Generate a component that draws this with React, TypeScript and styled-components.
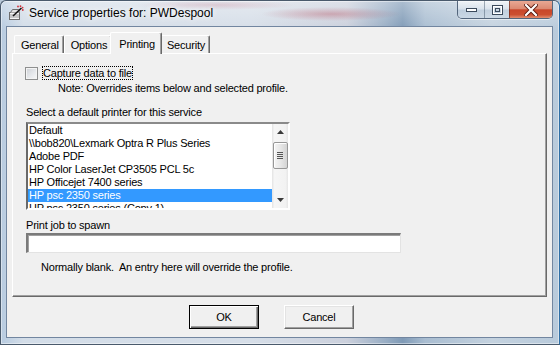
import React from 'react';
import styled, { createGlobalStyle } from 'styled-components';

const GlobalStyle = createGlobalStyle`
  html, body {
    margin: 0;
    padding: 0;
    background: #b8c8d8;
  }
  * {
    box-sizing: border-box;
  }
`;

const uiFont = `"Liberation Sans", Arial, sans-serif`;

const Window = styled.div`
  width: 560px;
  height: 345px;
  display: flex;
  flex-direction: column;
  padding: 0 6px 6px 5px;
  border: 1px solid #4a5a6c;
  border-right-color: #2f6fa6;
  border-radius: 6px 6px 0 0;
  box-shadow: inset 0 0 0 1px rgba(255, 255, 255, 0.45);
  background:
    radial-gradient(ellipse 70px 7px at 330px 13px, rgba(180, 70, 85, 0.35), transparent),
    radial-gradient(ellipse 80px 5px at 215px 4px, rgba(200, 110, 130, 0.25), transparent),
    linear-gradient(to bottom, rgba(255, 255, 255, 0.35), rgba(255, 255, 255, 0) 30px),
    linear-gradient(to right, #b7cbe0 0%, #d3dde8 4%, #d6dee8 45%, #cbd0dc 62%, #98adc4 69%, #7f9ab6 72%, #a9bdd1 76%, #c4d2df 88%, #b8cadb 100%);
  font-family: ${uiFont};
`;

const TitleBar = styled.div`
  height: 25px;
  display: flex;
  align-items: flex-start;
  padding-left: 2px;
`;

const AppIcon = styled.svg`
  width: 16px;
  height: 16px;
  margin-top: 4px;
  flex-shrink: 0;
`;

const Caption = styled.div`
  margin-left: 5px;
  margin-top: 5px;
  font-size: 12px;
  line-height: 15px;
  color: #000;
  text-shadow: 0 0 6px rgba(255, 255, 255, 0.95), 0 0 10px rgba(255, 255, 255, 0.8);
`;

const CaptionButtons = styled.div`
  margin-left: auto;
  display: flex;
  height: 18px;
  border: 1px solid rgba(45, 65, 90, 0.75);
  border-top: none;
  border-radius: 0 0 5px 5px;
  overflow: hidden;
  box-shadow: 0 1px 0 rgba(255, 255, 255, 0.5);
`;

const CapButton = styled.div<{ $width: number; $close?: boolean }>`
  width: ${({ $width }) => $width}px;
  height: 100%;
  display: flex;
  align-items: center;
  justify-content: center;
  border-left: ${({ $close }) => ($close ? '1px solid rgba(90, 30, 20, 0.6)' : '1px solid rgba(60, 80, 100, 0.45)')};
  background: ${({ $close }) =>
    $close
      ? 'linear-gradient(to bottom, #e9a894 0%, #dc8a72 45%, #c9472b 52%, #cc4f30 80%, #e28d70 100%)'
      : 'linear-gradient(to bottom, rgba(255,255,255,0.65) 0%, rgba(225,233,242,0.55) 48%, rgba(180,198,216,0.55) 52%, rgba(205,218,231,0.7) 100%)'};
  &:first-child {
    border-left: none;
  }
`;

const TabClient = styled.div`
  flex: 1;
  display: flex;
  flex-direction: column;
  padding: 5px 5px 0 5px;
  background: #f0f0f0;
  border: 1px solid #7286a0;
`;

const TabStrip = styled.div`
  height: 21px;
  display: flex;
  align-items: flex-end;
  padding-left: 2px;
  position: relative;
  z-index: 1;
`;

const Tab = styled.div<{ $active?: boolean }>`
  height: ${({ $active }) => ($active ? 22 : 18)}px;
  margin: ${({ $active }) => ($active ? '0 -2px -1px -2px' : '0')};
  padding: ${({ $active }) => ($active ? '5px 6px 0 8px' : '3px 4px 0 6px')};
  background: #f0f0f0;
  border-top: 1px solid #fff;
  border-left: 1px solid #fff;
  border-right: 1px solid #696969;
  border-radius: 2px 2px 0 0;
  box-shadow: inset -1px 0 0 #a0a0a0;
  font-size: 11px;
  line-height: 13px;
  letter-spacing: -0.2px;
  color: #000;
  white-space: nowrap;
  position: relative;
  z-index: ${({ $active }) => ($active ? 2 : 1)};
`;

const Panel = styled.div`
  height: 244px;
  display: flex;
  flex-direction: column;
  align-items: flex-start;
  padding: 0 12px 0 13px;
  background: #f0f0f0;
  border-top: 1px solid #fff;
  border-left: 1px solid #fff;
  border-right: 1px solid #696969;
  border-bottom: 1px solid #696969;
  box-shadow: inset -1px -1px 0 #a0a0a0;
`;

const CheckRow = styled.div`
  margin-top: 12px;
  height: 14px;
  display: flex;
  align-items: center;
`;

const CheckBox = styled.div`
  width: 13px;
  height: 13px;
  margin-left: -1px;
  border: 1px solid #8e8f8f;
  background: linear-gradient(135deg, #cdd0d5 0%, #e8eaed 60%, #f8f8f8 100%);
  box-shadow: inset 0 0 0 1px #f4f4f4;
`;

const FocusLabel = styled.span`
  margin-left: 4px;
  height: 14px;
  border: 1px dotted #000;
  font-size: 11px;
  line-height: 12px;
  letter-spacing: -0.2px;
  color: #000;
`;

const Text = styled.div<{ $top: number; $indent?: number }>`
  margin-top: ${({ $top }) => $top}px;
  margin-left: ${({ $indent }) => $indent ?? 0}px;
  font-size: 11px;
  line-height: 13px;
  letter-spacing: -0.2px;
  color: #000;
  white-space: pre;
`;

const ListBox = styled.div`
  margin-top: 3px;
  width: 264px;
  height: 88px;
  display: flex;
  background: #fff;
  border-top: 2px solid #8a8a8a;
  border-left: 2px solid #696969;
  border-right: 2px solid #fff;
  border-bottom: 2px solid #fff;
  overflow: hidden;
`;

const Items = styled.div`
  flex: 1;
  display: flex;
  flex-direction: column;
  overflow: hidden;
`;

const Item = styled.div<{ $selected?: boolean }>`
  height: 13px;
  flex-shrink: 0;
  padding-left: 1px;
  font-size: 11px;
  line-height: 13px;
  letter-spacing: -0.2px;
  white-space: nowrap;
  color: ${({ $selected }) => ($selected ? '#fff' : '#000')};
  background: ${({ $selected }) => ($selected ? '#3399ff' : 'transparent')};
`;

const ScrollBar = styled.div`
  width: 16px;
  display: flex;
  flex-direction: column;
  align-items: center;
  background: linear-gradient(to right, #e3e3e3 0%, #f6f6f6 15%, #f2f2f2 85%, #e6e6e6 100%);
`;

const ArrowBox = styled.div`
  width: 16px;
  height: 16px;
  flex-shrink: 0;
  display: flex;
  align-items: center;
  justify-content: center;
`;

const Thumb = styled.div`
  margin-top: 2px;
  width: 15px;
  height: 27px;
  border: 1px solid #979797;
  border-radius: 2px;
  background: linear-gradient(to right, #f5f5f5 0%, #e7e7e7 50%, #d4d4d4 100%);
  box-shadow: inset 1px 1px 0 #fff;
  display: flex;
  flex-direction: column;
  align-items: center;
  justify-content: center;
  gap: 1px;
`;

const Grip = styled.div`
  width: 6px;
  height: 1px;
  background: #555;
`;

const TrackFill = styled.div`
  flex: 1;
`;

const TextInput = styled.div`
  margin-top: 1px;
  width: 375px;
  height: 20px;
  background: #fff;
  border-top: 2px solid #7a7a7a;
  border-left: 2px solid #7a7a7a;
  border-right: 1px solid #e3e3e3;
  border-bottom: 1px solid #e3e3e3;
  box-shadow: inset 1px 1px 0 #a0a0a0;
`;

const ButtonRow = styled.div`
  margin-top: 8px;
  display: flex;
  justify-content: center;
  gap: 25px;
  padding-right: 16px;
`;

const PushButton = styled.div<{ $default?: boolean }>`
  width: 70px;
  height: 24px;
  display: flex;
  align-items: center;
  justify-content: center;
  background: #f0f0f0;
  border: 1px solid;
  border-color: ${({ $default }) => ($default ? '#000' : '#fff #696969 #696969 #fff')};
  box-shadow: ${({ $default }) =>
    $default
      ? 'inset 1px 1px 0 #fff, inset -1px -1px 0 #696969, inset -2px -2px 0 #a0a0a0'
      : 'inset -1px -1px 0 #a0a0a0, inset 1px 1px 0 #e3e3e3'};
  font-size: 11px;
  line-height: 13px;
  letter-spacing: -0.2px;
  color: #000;
`;

const tabs = ['General', 'Options', 'Printing', 'Security'];

const printers = [
  'Default',
  '\\\\bob820\\Lexmark Optra R Plus Series',
  'Adobe PDF',
  'HP Color LaserJet CP3505 PCL 5c',
  'HP Officejet 7400 series',
  'HP psc 2350 series',
  'HP psc 2350 series (Copy 1)',
];

const ServiceIcon = () => (
  <AppIcon viewBox="0 0 16 16">
    <rect x="1.5" y="7.5" width="10" height="7" fill="#f4f4f4" stroke="#6d6d6d" />
    <line x1="2" y1="10" x2="11" y2="10" stroke="#9a9a9a" />
    <line x1="2" y1="12" x2="11" y2="12" stroke="#9a9a9a" />
    <path d="M2.5 7.5 L4.5 4.5 L10.5 4.5 L11.5 7.5" fill="#e2e2e2" stroke="#6d6d6d" />
    <line x1="5" y1="11" x2="13.5" y2="3" stroke="#111" strokeWidth="1.6" />
    <circle cx="10" cy="1.5" r="0.9" fill="#d0303a" />
    <circle cx="12.5" cy="1.2" r="0.9" fill="#d0303a" />
    <circle cx="14.6" cy="2.6" r="0.9" fill="#d0303a" />
    <circle cx="14.8" cy="5" r="0.9" fill="#d0303a" />
  </AppIcon>
);

const App: React.FC = () => {
  return (
    <>
      <GlobalStyle />
      <Window>
        <TitleBar>
          <ServiceIcon />
          <Caption>Service properties for: PWDespool</Caption>
          <CaptionButtons>
            <CapButton $width={26}>
              <svg width="11" height="6" viewBox="0 0 11 6">
                <rect x="0.5" y="1.5" width="10" height="3" fill="#fff" stroke="#3b4a5c" />
              </svg>
            </CapButton>
            <CapButton $width={25}>
              <svg width="11" height="10" viewBox="0 0 11 10">
                <rect x="0.5" y="0.5" width="10" height="9" fill="none" stroke="#3b4a5c" />
                <rect x="1.5" y="1.5" width="8" height="7" fill="none" stroke="#fff" />
                <rect x="3.5" y="3.5" width="4" height="3" fill="none" stroke="#3b4a5c" />
              </svg>
            </CapButton>
            <CapButton $width={43} $close>
              <svg width="14" height="12" viewBox="0 0 14 12">
                <path d="M2 1 L12 11 M12 1 L2 11" stroke="#5a1a10" strokeWidth="4" strokeLinecap="square" />
                <path d="M2 1 L12 11 M12 1 L2 11" stroke="#fff" strokeWidth="2.2" strokeLinecap="square" />
              </svg>
            </CapButton>
          </CaptionButtons>
        </TitleBar>
        <TabClient>
          <TabStrip>
            {tabs.map(t => (
              <Tab key={t} $active={t === 'Printing'}>
                {t}
              </Tab>
            ))}
          </TabStrip>
          <Panel>
            <CheckRow>
              <CheckBox />
              <FocusLabel>Capture data to file</FocusLabel>
            </CheckRow>
            <Text $top={2} $indent={32}>Note: Overrides items below and selected profile.</Text>
            <Text $top={11}>Select a default printer for this service</Text>
            <ListBox>
              <Items>
                {printers.map(p => (
                  <Item key={p} $selected={p === 'HP psc 2350 series'}>
                    {p}
                  </Item>
                ))}
              </Items>
              <ScrollBar>
                <ArrowBox>
                  <svg width="7" height="4" viewBox="0 0 7 4">
                    <path d="M0 4 L3.5 0 L7 4 Z" fill="#3a3a3a" />
                  </svg>
                </ArrowBox>
                <Thumb>
                  <Grip />
                  <Grip />
                  <Grip />
                  <Grip />
                </Thumb>
                <TrackFill />
                <ArrowBox>
                  <svg width="7" height="4" viewBox="0 0 7 4">
                    <path d="M0 0 L7 0 L3.5 4 Z" fill="#3a3a3a" />
                  </svg>
                </ArrowBox>
              </ScrollBar>
            </ListBox>
            <Text $top={9}>Print job to spawn</Text>
            <TextInput />
            <Text $top={8} $indent={15}>Normally blank.  An entry here will override the profile.</Text>
          </Panel>
          <ButtonRow>
            <PushButton $default>OK</PushButton>
            <PushButton>Cancel</PushButton>
          </ButtonRow>
        </TabClient>
      </Window>
    </>
  );
};

export default App;
